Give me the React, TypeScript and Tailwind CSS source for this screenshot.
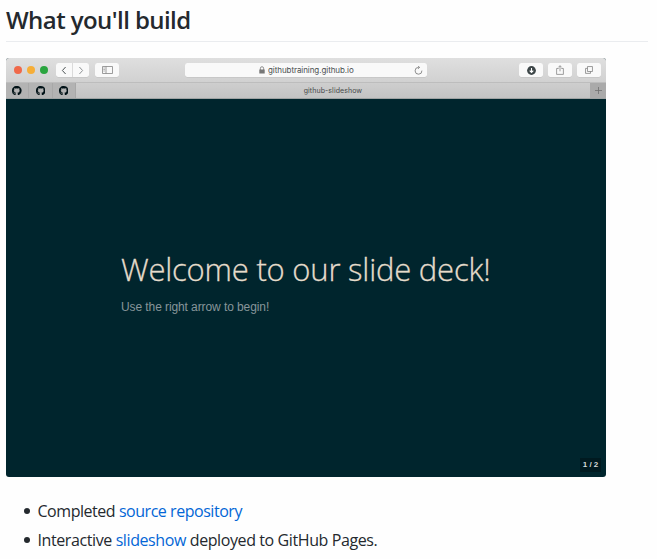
import type { ReactNode } from "react";

const OCTOCAT =
  "M8 0C3.58 0 0 3.58 0 8c0 3.54 2.29 6.53 5.47 7.59.4.07.55-.17.55-.38 0-.19-.01-.82-.01-1.49-2.01.37-2.53-.49-2.69-.94-.09-.23-.48-.94-.82-1.13-.28-.15-.68-.52-.01-.53.63-.01 1.08.58 1.23.82.72 1.21 1.87.87 2.33.66.07-.52.28-.87.51-1.07-1.78-.2-3.64-.89-3.64-3.95 0-.87.31-1.59.82-2.15-.08-.2-.36-1.02.08-2.12 0 0 .67-.21 2.2.82.64-.18 1.32-.27 2-.27s1.36.09 2 .27c1.53-1.04 2.2-.82 2.2-.82.44 1.1.16 1.92.08 2.12.51.56.82 1.27.82 2.15 0 3.07-1.87 3.75-3.65 3.95.29.25.54.73.54 1.48 0 1.07-.01 1.93-.01 2.2 0 .21.15.46.55.38A8.01 8.01 0 0 0 16 8c0-4.42-3.58-8-8-8z";

function ToolButton({ children }: { children: ReactNode }) {
  return (
    <div className="flex h-[14px] w-6 items-center justify-center rounded-[2.5px] bg-[#f9f9f9] shadow-[0_0.5px_0.5px_#bbb]">
      {children}
    </div>
  );
}

function Toolbar() {
  return (
    <div className="flex h-6 items-center bg-linear-to-b from-[#dfdfdf] to-[#d1d1d1] pr-[5px] pl-[8px]">
      <div className="flex gap-[5px]">
        <span className="size-2 rounded-full bg-[#f0694a]" />
        <span className="size-2 rounded-full bg-[#f6ae38]" />
        <span className="size-2 rounded-full bg-[#2aa53f]" />
      </div>
      <div className="ml-2 flex h-[14px] w-[33px] rounded-[2.5px] bg-[#f9f9f9] shadow-[0_0.5px_0.5px_#bbb]">
        <span className="flex flex-1 items-center justify-center border-r border-[#dadada]">
          <svg width="6" height="9" viewBox="0 0 6 9" fill="none" stroke="#4c5254" strokeWidth="1">
            <path d="M4.6 1 1.4 4.5l3.2 3.5" />
          </svg>
        </span>
        <span className="flex flex-1 items-center justify-center">
          <svg width="6" height="9" viewBox="0 0 6 9" fill="none" stroke="#8d9193" strokeWidth="1">
            <path d="m1.4 1 3.2 3.5L1.4 8" />
          </svg>
        </span>
      </div>
      <div className="ml-[6px]">
        <ToolButton>
          <svg width="11" height="8" viewBox="0 0 11 8" fill="none" stroke="#858585" strokeWidth=".8">
            <path d="M.5.5h10v7H.5zM4 .5v7M1.5 2h1.2M1.5 3.5h1.2M1.5 5h1.2" />
          </svg>
        </ToolButton>
      </div>
      <div className="ml-[66px] flex h-[14px] w-[242px] items-center rounded-[2.5px] bg-[#f9f9f9] pr-1 shadow-[0_0.5px_0.5px_#bbb]">
        <svg className="ml-[74px]" width="6" height="8" viewBox="0 0 6 8">
          <path d="M.3 3.5h5.4v4H.3z" fill="#777" />
          <path d="M1.4 4V2.3a1.6 1.6 0 0 1 3.2 0V4" fill="none" stroke="#777" strokeWidth=".8" />
        </svg>
        <span className="ml-[3px] pt-px font-[Inter,sans-serif] text-[8px] leading-[13px] tracking-[-0.07px] text-[#4b4f50]">
          githubtraining.github.io
        </span>
        <svg className="ml-auto" width="9" height="9" viewBox="0 0 9 9" fill="none" stroke="#737373" strokeWidth=".8">
          <path d="M7.9 4.6A3.4 3.4 0 1 1 4.5 1.4h.8M4.1.1l1.5 1.3-1.5 1.4" />
        </svg>
      </div>
      <div className="ml-auto flex gap-[5px]">
        <ToolButton>
          <svg width="9" height="9" viewBox="0 0 9 9">
            <circle cx="4.5" cy="4.5" r="4.4" fill="#3d4648" />
            <path d="M4.5 2v4.3M2.7 4.6l1.8 1.9 1.8-1.9" fill="none" stroke="#fff" strokeWidth="1.1" />
          </svg>
        </ToolButton>
        <ToolButton>
          <svg width="8" height="10" viewBox="0 0 8 10" fill="none" stroke="#888" strokeWidth=".8">
            <path d="M2.7 3.5H.6v5.9h6.8V3.5H5.3M4 6.3V.8M2.3 2.4 4 .7l1.7 1.7" />
          </svg>
        </ToolButton>
        <ToolButton>
          <svg width="8" height="8" viewBox="0 0 9 9" fill="none" stroke="#777" strokeWidth=".8">
            <path d="M2.8 2.7H.6v5.6h5.6V6.2M2.8.6h5.6v5.6H2.8z" />
          </svg>
        </ToolButton>
      </div>
    </div>
  );
}

function TabBar() {
  return (
    <div className="flex h-[17px] border-t border-b border-t-[#bdbdbd] border-b-[#9fa3a3] bg-linear-to-b from-[#cecece] to-[#c3c3c3]">
      <div className="flex bg-[#b3b3b3]">
        {[0, 1, 2].map((tab) => (
          <span
            key={tab}
            className="flex w-[23.3px] items-center justify-center border-r border-[#a8a8a8]"
          >
            <svg width="9.5" height="9.5" viewBox="0 0 16 16" fill="#001318" stroke="#001318" strokeWidth=".5">
              <path d={OCTOCAT} />
            </svg>
          </span>
        ))}
      </div>
      <span className="flex-1 text-center font-[Inter,sans-serif] text-[7px] leading-[15px] tracking-[0.08px] text-[#454848]">
        github-slideshow
      </span>
      <span className="flex w-4 items-center justify-center bg-[#aaa]">
        <svg width="7" height="7" viewBox="0 0 7 7" stroke="#707070" strokeWidth=".8">
          <path d="M3.5 0v7M0 3.5h7" />
        </svg>
      </span>
    </div>
  );
}

export default function App() {
  return (
    <main className="h-[559px] overflow-hidden bg-[#fefefe] pr-[9px] pl-[6px] font-['Open_Sans',sans-serif] text-[#24292e]">
      <h2 className="h-[42px] border-b border-[#eaecef] pt-[5px] text-[24px] leading-[30px] font-semibold tracking-[-0.57px] whitespace-nowrap">
        What you&apos;ll build
      </h2>
      <div className="mt-4 flex h-[419px] w-[600px] flex-col overflow-hidden rounded-[3px] bg-[#00252d]">
        <Toolbar />
        <TabBar />
        <div className="flex flex-1 flex-col pl-[115px]">
          <h1 className="mt-[148px] text-[31px] leading-[44px] font-light tracking-[-0.21px] whitespace-nowrap text-[#e5dccb] [-webkit-text-stroke:0.3px_#e5dccb]">
            Welcome to our slide deck!
          </h1>
          <p className="mt-[7px] font-['Liberation_Sans',sans-serif] text-[12px] leading-[18px] tracking-[-0.09px] whitespace-nowrap text-[#87959a]">
            Use the right arrow to begin!
          </p>
          <span className="mt-auto mr-[5px] mb-[5px] flex h-[14px] w-[21px] items-center justify-center self-end bg-[#001a20] font-['Liberation_Sans',sans-serif] text-[8px] font-bold whitespace-nowrap text-[#d5dada]">
            1 / 2
          </span>
        </div>
      </div>
      <ul className="mt-[22px] flex flex-col gap-[5px] text-[16px] leading-6 whitespace-nowrap">
        <li className="flex items-center">
          <span className="mr-[8px] ml-[18px] size-[5.5px] rounded-full bg-[#24292e]" />
          <span className="tracking-[-0.46px]">
            Completed <a className="text-[#0366d6]">source repository</a>
          </span>
        </li>
        <li className="flex items-center">
          <span className="mr-[8px] ml-[18px] size-[5.5px] rounded-full bg-[#24292e]" />
          <span className="tracking-[-0.4px]">
            Interactive <a className="text-[#0366d6]">slideshow</a> deployed to GitHub Pages.
          </span>
        </li>
      </ul>
    </main>
  );
}
